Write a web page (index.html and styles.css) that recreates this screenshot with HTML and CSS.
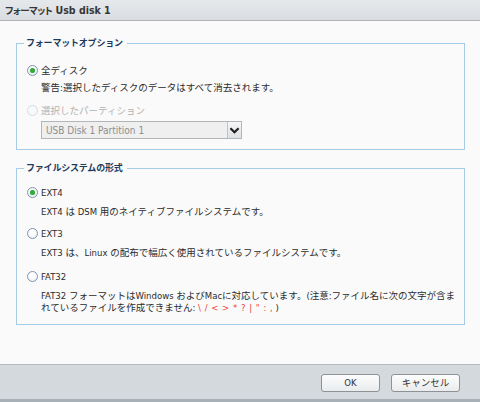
FILE: index.html
```html
<!DOCTYPE html>
<html lang="ja">
<head>
<meta charset="utf-8">
<title>フォーマット Usb disk 1</title>
<link rel="stylesheet" href="styles.css">
</head>
<body>
<div class="dialog">
  <div class="titlebar"><span class="title-ja">フォーマット</span> Usb disk 1</div>
  <div class="content">
    <fieldset class="group group-first">
      <legend class="legend">フォーマットオプション</legend>
      <div class="opt"><span class="radio checked"></span><span class="opt-label">全ディスク</span></div>
      <p class="desc desc-warn">警告:選択したディスクのデータはすべて消去されます。</p>
      <div class="opt opt-disabled"><span class="radio disabled"></span><span class="opt-label">選択したパーティション</span></div>
      <div class="select">
        <span class="select-text">USB Disk 1 Partition 1</span>
        <span class="select-btn"><svg width="13" height="17" viewBox="0 0 13 17"><path d="M3.2 7 L6.5 10.2 L9.8 7" fill="none" stroke="#1e1e1e" stroke-width="2.2" stroke-linecap="square"/></svg></span>
      </div>
    </fieldset>
    <fieldset class="group group-second">
      <legend class="legend">ファイルシステムの形式</legend>
      <div class="opt"><span class="radio checked"></span><span class="opt-label">EXT4</span></div>
      <p class="desc">EXT4 は DSM 用のネイティブファイルシステムです。</p>
      <div class="opt opt-gap"><span class="radio"></span><span class="opt-label">EXT3</span></div>
      <p class="desc">EXT3 は、Linux の配布で幅広く使用されているファイルシステムです。</p>
      <div class="opt opt-gap2"><span class="radio"></span><span class="opt-label">FAT32</span></div>
      <p class="desc desc-wrap">FAT32 フォーマットはWindows およびMacに対応しています。(注意:ファイル名に次の文字が含まれているファイルを作成できません: <span class="bad">\ / &lt; &gt; * ? | " : ,</span> )</p>
    </fieldset>
  </div>
  <div class="footer">
    <button class="btn btn-ok">OK</button>
    <button class="btn btn-cancel">キャンセル</button>
  </div>
</div>
</body>
</html>
```
FILE: styles.css
```css
html, body {
  margin: 0;
  padding: 0;
  background: #fafafa;
}
body {
  font-family: "DejaVu Sans Condensed", "DejaVu Sans", "Noto Sans CJK JP", sans-serif;
  font-size: 9.5px;
  color: #2b2b2b;
}
.dialog {
  width: 480px;
  height: 402px;
  display: flex;
  flex-direction: column;
  background: #fafafa;
}
.titlebar {
  height: 20px;
  line-height: 20px;
  padding-left: 5px;
  font-size: 10.5px;
  font-weight: bold;
  color: #363636;
  background: linear-gradient(#e6e9ec, #d9dde1);
  border-bottom: 1px solid #b3b6b9;
  flex: none;
}
.title-ja {
  font-size: 9.5px;
  font-feature-settings: "palt";
  letter-spacing: -0.5px;
}
.content {
  flex: 1;
  padding: 15px 15px 0 16px;
}
.group {
  margin: 0;
  padding: 10px 8px 10px 7px;
  border: 1px solid #a6cbe7;
  min-width: 0;
}
.group-second {
  margin-top: 11px;
  padding-top: 7px;
  padding-bottom: 10px;
}
.legend {
  padding: 0 4px 0 2px;
  line-height: 14px;
  font-weight: bold;
  font-size: 9px;
  color: #1d3a5c;
  letter-spacing: -0.2px;
}
.opt {
  display: flex;
  align-items: center;
  height: 20px;
  padding-left: 3px;
}
.opt-gap { margin-top: 5px; }
.opt-gap2 { margin-top: 7px; }
.opt-label {
  margin-left: 3px;
}
.opt-disabled {
  margin-top: 6px;
  color: #b2b2b2;
}
.radio {
  box-sizing: border-box;
  width: 11px;
  height: 11px;
  border-radius: 50%;
  border: 1px solid #7d95b0;
  background: radial-gradient(circle at 50% 35%, #ffffff 30%, #e3e9ef 100%);
  position: relative;
  flex: none;
}
.radio.checked::after {
  content: "";
  position: absolute;
  left: 2px;
  top: 2px;
  width: 5px;
  height: 5px;
  border-radius: 50%;
  background: #36a93c;
  box-shadow: 0 0 1px #8fd38f;
}
.radio.disabled {
  border-color: #d3dbe3;
  background: #f8f9fa;
}
.desc {
  margin: 4px 0 0 0;
  padding-left: 17px;
  line-height: 12px;
}
.desc-warn {
  margin-top: 2px;
}
.desc-wrap {
  margin-right: -6px;
}
.bad {
  color: #f23b3b;
  word-spacing: 1px;
}
.select {
  margin: 1px 0 0 17px;
  width: 201px;
  height: 18px;
  box-sizing: border-box;
  border: 1px solid #b2b6ba;
  background: #efefef;
  display: flex;
  align-items: center;
}
.select-text {
  flex: 1;
  padding-left: 4px;
  font-family: "DejaVu Sans Condensed", "DejaVu Sans", sans-serif;
  font-size: 10px;
  color: #8e8e8e;
}
.select-btn {
  width: 13px;
  height: 16px;
  border-left: 1px solid #bfc3c7;
  background: linear-gradient(#f6f7f8, #dde1e5);
  display: flex;
  align-items: center;
  justify-content: center;
}
.select-btn svg {
  display: block;
}
.footer {
  flex: none;
  height: 25px;
  border-top: 1px solid #b6babd;
  border-bottom: 3px solid #a7afb7;
  background: #d4d9dd;
  display: flex;
  justify-content: flex-end;
  align-items: flex-start;
  padding: 9px 20px 0 0;
  gap: 11px;
}
.btn {
  height: 18px;
  margin: 0;
  padding: 0;
  border: 1px solid #8e9297;
  border-radius: 3px;
  background: linear-gradient(#fdfdfd, #e9ebed);
  font-family: "DejaVu Sans Condensed", "DejaVu Sans", "Noto Sans CJK JP", sans-serif;
  font-size: 9.5px;
  color: #333333;
  line-height: 16px;
}
.btn-ok { width: 59px; }
.btn-cancel { width: 69px; }
```
